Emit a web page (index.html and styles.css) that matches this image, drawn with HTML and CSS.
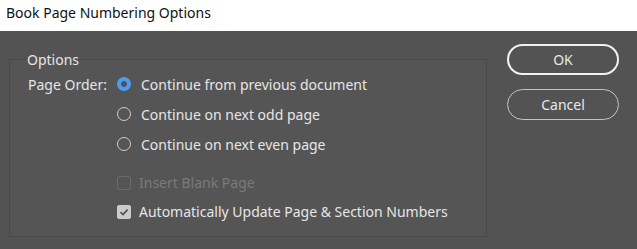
FILE: index.html
```html
<!DOCTYPE html>
<html lang="en">
<head>
    <meta charset="UTF-8">
    <meta name="viewport" content="width=device-width, initial-scale=1.0">
    <title>Book Page Numbering Options</title>
    <link rel="stylesheet" href="styles.css">
</head>
<body>
    <div class="titlebar">Book Page Numbering Options</div>

    <div class="dialog">
        <fieldset class="options">
            <legend>Options</legend>

            <div class="row">
                <span class="row-label">Page Order:</span>
                <span class="radio checked"></span>
                <span>Continue from previous document</span>
            </div>
            <div class="row">
                <span class="row-label"></span>
                <span class="radio"></span>
                <span>Continue on next odd page</span>
            </div>
            <div class="row">
                <span class="row-label"></span>
                <span class="radio"></span>
                <span>Continue on next even page</span>
            </div>

            <div class="row check-row first disabled">
                <span class="row-label"></span>
                <span class="box"></span>
                <span>Insert Blank Page</span>
            </div>
            <div class="row check-row">
                <span class="row-label"></span>
                <span class="box checked">
                    <svg width="10" height="10" viewBox="0 0 10 10">
                        <path d="M1.5 5.2 L4 7.6 L8.6 2.6" fill="none" stroke="#505050" stroke-width="1.6"/>
                    </svg>
                </span>
                <span>Automatically Update Page &amp; Section Numbers</span>
            </div>
        </fieldset>

        <div class="buttons">
            <button class="btn default">OK</button>
            <button class="btn">Cancel</button>
        </div>
    </div>
</body>
</html>
```

FILE: styles.css
```css
body {
    margin: 0;
    width: 637px;
    height: 249px;
    background-color: #535353;
    font-family: "Noto Sans", "Segoe UI", sans-serif;
    font-size: 14px;
    color: #e6e6e6;
    overflow: hidden;
}

.titlebar {
    height: 31px;
    line-height: 25px;
    padding-left: 6px;
    background: #fff;
    color: #111;
    font-size: 14px;
}

.dialog {
    display: flex;
    align-items: flex-start;
    gap: 20px;
    padding: 13px 0 0 9px;
}

.options {
    width: 458px;
    margin: 6px 0 0 0;
    padding: 0 0 10px 18px;
    border: 1px solid #4a4a4a;
    background: #555555;
}

.options legend {
    padding: 0;
    margin-left: -1px;
    line-height: 19px;
}

.row {
    display: flex;
    align-items: center;
    height: 30px;
}

.row-label {
    width: 89px;
}

.radio {
    width: 12px;
    height: 12px;
    margin-right: 10px;
    border: 1px solid #cdcdcd;
    border-radius: 50%;
}

.radio.checked {
    width: 14px;
    height: 14px;
    border: none;
    background: radial-gradient(circle, #535353 0 2.6px, #4b9cf0 3.2px);
}

.check-row {
    height: 29px;
}

.check-row.first {
    margin-top: 9px;
}

.box {
    display: flex;
    align-items: center;
    justify-content: center;
    width: 12px;
    height: 12px;
    margin-right: 8px;
    border: 1px solid #c8c8c8;
    border-radius: 2px;
}

.box.checked {
    background: #cbcbcb;
    border-color: #cbcbcb;
}

.disabled {
    color: #7a7a7a;
}

.disabled .box {
    border-color: #6a6a6a;
}

.buttons {
    display: flex;
    flex-direction: column;
    gap: 14px;
}

.btn {
    width: 112px;
    height: 31px;
    background: transparent;
    color: #e8e8e8;
    font-family: inherit;
    font-size: 14px;
    border: 1px solid #c4c4c4;
    border-radius: 16px;
}

.btn.default {
    border: 2px solid #f2f2f2;
}
```
